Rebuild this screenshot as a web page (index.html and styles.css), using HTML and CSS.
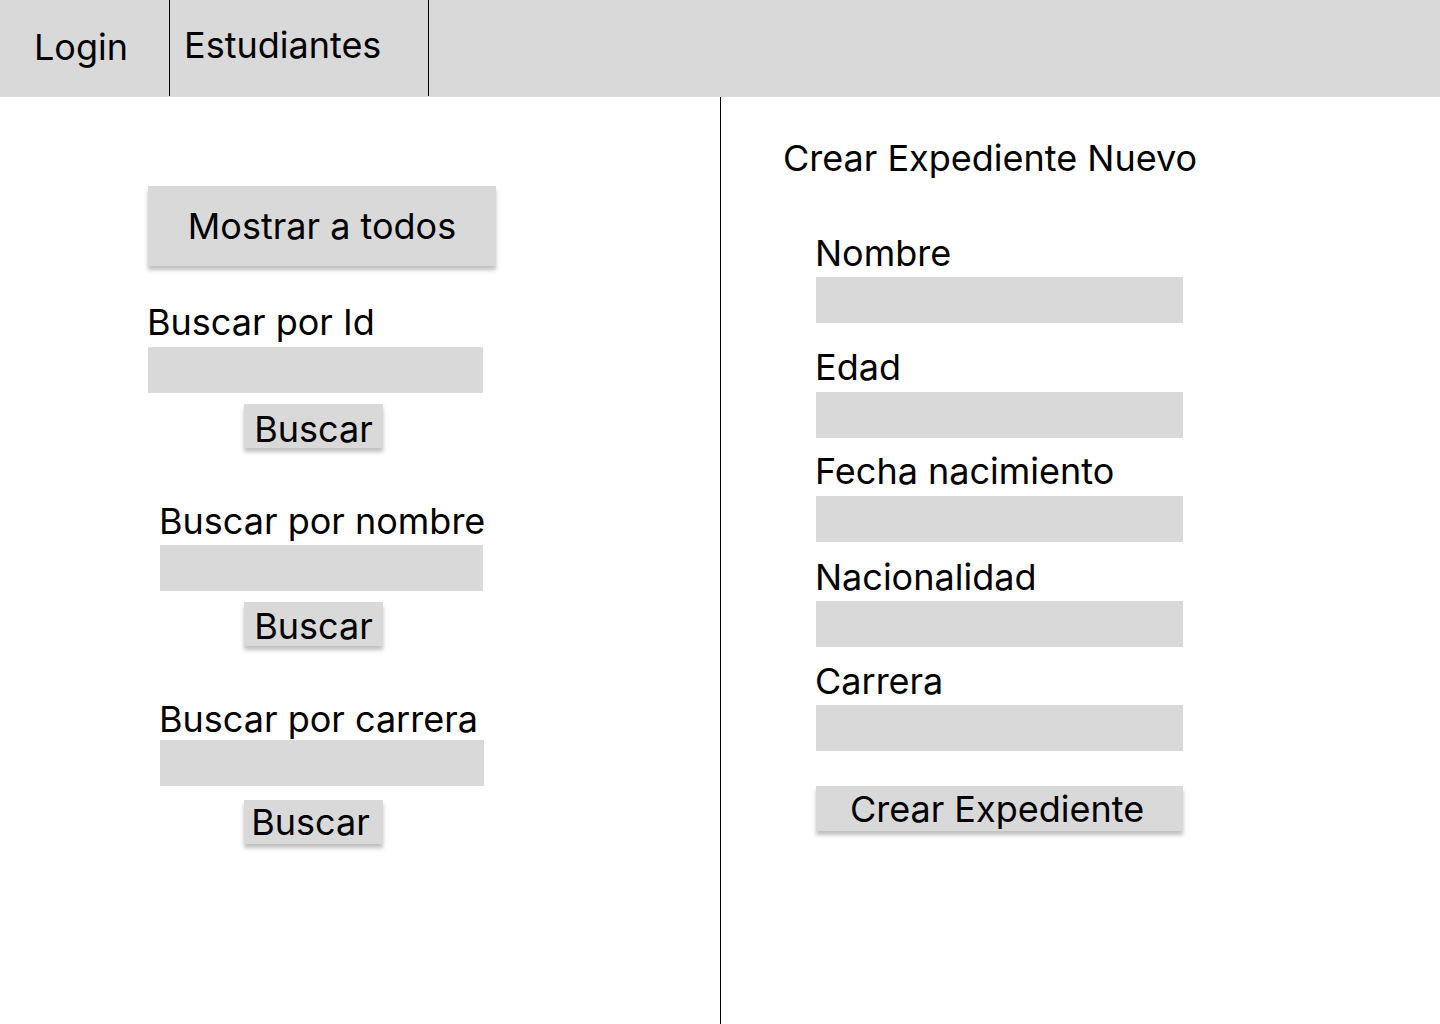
FILE: index.html
```html
<!DOCTYPE html>
<html lang="es">
<head>
<meta charset="utf-8">
<title>Estudiantes</title>
<link rel="stylesheet" href="styles.css">
</head>
<body>
<header class="topbar">
  <div class="tab tab-login"><span class="tab-label">Login</span></div>
  <div class="tab tab-students"><span class="tab-label">Estudiantes</span></div>
</header>
<main class="content">
  <section class="search-panel">
    <button class="btn btn-all">Mostrar a todos</button>
    <div class="search-group group-id">
      <label class="label label-id">Buscar por Id</label>
      <div class="input input-id"></div>
      <button class="btn btn-search btn-search-1">Buscar</button>
    </div>
    <div class="search-group group-name">
      <label class="label label-name">Buscar por nombre</label>
      <div class="input input-name"></div>
      <button class="btn btn-search btn-search-2">Buscar</button>
    </div>
    <div class="search-group group-career">
      <label class="label label-career">Buscar por carrera</label>
      <div class="input input-career"></div>
      <button class="btn btn-search btn-search-3">Buscar</button>
    </div>
  </section>
  <section class="create-panel">
    <h2 class="create-title">Crear Expediente Nuevo</h2>
    <div class="form">
      <label class="label field-label fl-nombre">Nombre</label>
      <div class="input field-input"></div>
      <label class="label field-label fl-edad">Edad</label>
      <div class="input field-input"></div>
      <label class="label field-label fl-fecha">Fecha nacimiento</label>
      <div class="input field-input"></div>
      <label class="label field-label fl-nac">Nacionalidad</label>
      <div class="input field-input"></div>
      <label class="label field-label fl-carrera">Carrera</label>
      <div class="input field-input"></div>
      <button class="btn btn-create">Crear Expediente</button>
    </div>
  </section>
</main>
</body>
</html>
```
FILE: styles.css
```css
* { box-sizing: border-box; }
html, body { margin: 0; padding: 0; }
body {
  width: 1440px;
  height: 1024px;
  overflow: hidden;
  background: #ffffff;
  color: #000000;
  font-family: "Inter", "Noto Sans", sans-serif;
  font-size: 36px;
}
.topbar {
  display: flex;
  align-items: flex-start;
  height: 97px;
  background: #d9d9d9;
}
.tab {
  height: 96px;
  border-right: 1px solid #000;
}
.tab-login { width: 170px; padding: 27px 0 0 34px; }
.tab-students { width: 259px; padding: 25px 0 0 14px; }
.tab-label { display: block; line-height: 40px; font-size: 36px; white-space: nowrap; }

.content {
  display: grid;
  grid-template-columns: 721px 1fr;
  height: 927px;
}
.search-panel {
  border-right: 1px solid #000;
  padding: 89px 0 0 148px;
  display: flex;
  flex-direction: column;
  align-items: flex-start;
}
.btn {
  font-family: inherit;
  color: #000;
  border: none;
  border-radius: 0;
  background: #d9d9d9;
  box-shadow: 0 4px 4px rgba(0, 0, 0, 0.25);
  padding: 0;
  margin: 0;
  text-align: center;
  white-space: nowrap;
}
.btn-all {
  width: 348px;
  height: 80px;
  line-height: 80px;
  font-size: 36px;
}
.search-group {
  display: flex;
  flex-direction: column;
  align-items: flex-start;
}
.label {
  display: block;
  line-height: 40px;
  font-size: 36px;
  white-space: nowrap;
}
.input {
  height: 46px;
  background: #d9d9d9;
}
.group-id { margin-top: 36px; }
.label-id { margin-left: -1px; }
.input-id { width: 335px; margin-top: 5px; }
.group-name { margin-top: 53px; padding-left: 12px; }
.label-name { margin-left: -1px; }
.input-name { width: 323px; margin-top: 4px; }
.group-career { margin-top: 53px; padding-left: 12px; }
.label-career { margin-left: -1px; }
.input-career { width: 324px; margin-top: 1px; }

.btn-search {
  width: 139px;
  height: 44px;
  font-size: 36px;
  margin-left: 96px;
}
.btn-search-1 { margin-top: 11px; padding-top: 6px; line-height: 38px; }
.btn-search-2 { margin-top: 11px; padding-top: 5px; line-height: 39px; margin-left: 84px; }
.btn-search-3 { margin-top: 14px; line-height: 44px; margin-left: 84px; padding-right: 6px; }

.create-panel {
  padding: 41px 0 0 62px;
}
.create-title {
  margin: 0;
  font-weight: 400;
  font-size: 36px;
  line-height: 40px;
  white-space: nowrap;
}
.form {
  display: flex;
  flex-direction: column;
  align-items: flex-start;
  padding-left: 33px;
}
.field-label { margin-left: -1px; }
.field-input { width: 367px; margin-top: 4px; }
.fl-nombre { margin-top: 55px; }
.fl-edad { margin-top: 24px; }
.fl-edad + .field-input { margin-top: 5px; }
.fl-fecha { margin-top: 13px; }
.fl-fecha + .field-input { margin-top: 5px; }
.fl-nac { margin-top: 15px; }
.fl-carrera { margin-top: 14px; }
.btn-create {
  width: 367px;
  height: 45px;
  margin-top: 35px;
  padding: 1px 5px 0 0;
  line-height: 44px;
  font-size: 36px;
}
```
